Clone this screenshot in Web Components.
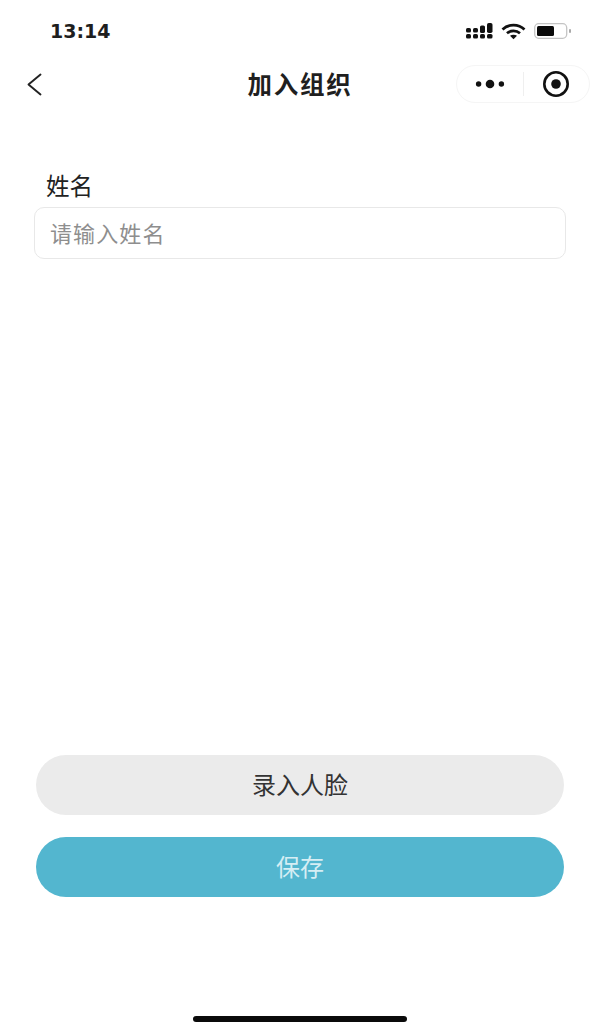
<!DOCTYPE html>
<html lang="zh">
<head>
<meta charset="utf-8">
<title>加入组织</title>
<style>
  html, body { margin: 0; height: 100%; background: #fff; }
  body { font-family: "Noto Sans CJK SC", "Liberation Sans", sans-serif; }
</style>
</head>
<body>
<join-page>
  <status-bar slot="status" time="13:14"></status-bar>
  <nav-bar slot="nav" title="加入组织"></nav-bar>
  <text-field slot="form" label="姓名" placeholder="请输入姓名"></text-field>
  <pill-button slot="actions" variant="grey">录入人脸</pill-button>
  <pill-button slot="actions" variant="primary">保存</pill-button>
</join-page>

<script>
class JoinPage extends HTMLElement {
  connectedCallback() {
    this.attachShadow({ mode: 'open' });
    this.shadowRoot.innerHTML = `
      <style>
        :host { display: flex; flex-direction: column; width: 600px; height: 1032px; overflow: hidden; background: #fff; }
        .form { padding: 62px 34px 0; flex: 1; }
        .actions { display: flex; flex-direction: column; gap: 22px; padding: 0 36px; }
        .home { display: flex; justify-content: center; padding: 119px 0 10px; }
        .home i { display: block; width: 214px; height: 6px; border-radius: 3px; background: #0a0a0a; }
      </style>
      <slot name="status"></slot>
      <slot name="nav"></slot>
      <div class="form"><slot name="form"></slot></div>
      <div class="actions"><slot name="actions"></slot></div>
      <div class="home"><i></i></div>
    `;
  }
}
customElements.define('join-page', JoinPage);

class StatusBar extends HTMLElement {
  connectedCallback() {
    this.attachShadow({ mode: 'open' });
    this.shadowRoot.innerHTML = `
      <style>
        :host { display: flex; align-items: center; justify-content: space-between; height: 62px; padding: 0 28px 0 50px; box-sizing: border-box; }
        .time { font: 700 19px/24px "DejaVu Sans", sans-serif; color: #1e1e1e; }
        .icons { display: flex; align-items: center; gap: 8px; }
        svg { display: block; }
        .wifi { margin-left: 0; }
      </style>
      <span class="time">${this.getAttribute('time')}</span>
      <span class="icons">
        <svg width="27" height="16" viewBox="0 0 27 16" fill="#111">
          <rect x="0" y="5" width="5" height="4.6" rx="1.6"/><rect x="0" y="11" width="5" height="4.6" rx="1.6"/>
          <rect x="7" y="5" width="5" height="4.6" rx="1.6"/><rect x="7" y="11" width="5" height="4.6" rx="1.6"/>
          <rect x="14" y="2.5" width="5" height="7.5" rx="1.6"/><rect x="14" y="11" width="5" height="4.6" rx="1.6"/>
          <rect x="21" y="0" width="5.5" height="10" rx="1.8"/><rect x="21" y="11" width="5.5" height="4.6" rx="1.6"/>
        </svg>
        <svg class="wifi" width="25" height="17" viewBox="0 0 25 17" fill="none" stroke="#111" stroke-width="2.7">
          <path d="M1.5 6.5C7.5 .7 17.5 .7 23.5 6.5"/>
          <path d="M6 10.3C9.6 7 15.4 7 19 10.3"/>
          <path d="M12.5 16.2 9 12.8C11 11.3 14 11.3 16 12.8Z" fill="#111" stroke="none"/>
        </svg>
        <svg width="38" height="16" viewBox="0 0 38 16">
          <rect x=".7" y=".7" width="32" height="14.6" rx="4" fill="none" stroke="#c4c4c4" stroke-width="1.3"/>
          <rect x="3" y="3" width="17" height="10" rx="1.5" fill="#0a0a0a"/>
          <rect x="35" y="6" width="2" height="4" rx="1" fill="#aaa"/>
        </svg>
      </span>
    `;
  }
}
customElements.define('status-bar', StatusBar);

class NavBar extends HTMLElement {
  connectedCallback() {
    this.attachShadow({ mode: 'open' });
    this.shadowRoot.innerHTML = `
      <style>
        :host { display: grid; grid-template-columns: 1fr auto 1fr; align-items: center; height: 44px; padding: 0 10px; box-sizing: border-box; }
        .back { display: block; margin-left: 17px; }
        h1 { margin: 0; font: 700 24.5px/34px "Noto Sans CJK SC", sans-serif; letter-spacing: 1.8px; color: #1f1f1f; }
        .capsule { justify-self: end; display: flex; align-items: center; width: 134px; height: 38px; box-sizing: border-box; border: 1px solid #f5f5f5; border-radius: 19px; }
        .capsule span { flex: 1; display: flex; justify-content: center; }
        .capsule b { width: 1px; height: 24px; background: #efefef; }
      </style>
      <svg class="back" width="15" height="23" viewBox="0 0 15 23" fill="none" stroke="#222" stroke-width="1.9" stroke-linecap="round" stroke-linejoin="round"><path d="M13.5 1.5 1.5 11.5l12 10"/></svg>
      <h1>${this.getAttribute('title')}</h1>
      <div class="capsule">
        <span><svg width="30" height="12" viewBox="0 0 30 12" fill="#111"><circle cx="3.6" cy="6" r="2.7"/><circle cx="15" cy="6" r="4.3"/><circle cx="26.4" cy="6" r="2.7"/></svg></span>
        <b></b>
        <span><svg width="28" height="28" viewBox="0 0 28 28"><circle cx="14" cy="14" r="11.7" fill="none" stroke="#111" stroke-width="2.6"/><circle cx="14" cy="14" r="4.8" fill="#111"/></svg></span>
      </div>
    `;
  }
}
customElements.define('nav-bar', NavBar);

class TextField extends HTMLElement {
  connectedCallback() {
    this.attachShadow({ mode: 'open' });
    this.shadowRoot.innerHTML = `
      <style>
        :host { display: block; }
        label { display: block; padding-left: 12px; font-size: 23.5px; line-height: 34px; color: #222; margin-bottom: 5px; }
        .box { height: 52px; box-sizing: border-box; border: 1px solid #e8e8e8; border-radius: 10px; padding: 0 15px 3px; display: flex; align-items: center; font-size: 22px; letter-spacing: 1.1px; color: #8e8e8e; }
      </style>
      <label>${this.getAttribute('label')}</label>
      <div class="box">${this.getAttribute('placeholder')}</div>
    `;
  }
}
customElements.define('text-field', TextField);

class PillButton extends HTMLElement {
  connectedCallback() {
    this.attachShadow({ mode: 'open' });
    this.shadowRoot.innerHTML = `
      <style>
        :host { display: flex; align-items: center; justify-content: center; height: 60px; box-sizing: border-box; padding-bottom: 3px; border-radius: 30px; font-size: 24px; }
        :host([variant="grey"]) { background: #ebebeb; color: #333; }
        :host([variant="primary"]) { background: #53b6cf; color: #d6eef4; }
      </style>
      <slot></slot>
    `;
  }
}
customElements.define('pill-button', PillButton);
</script>
</body>
</html>
